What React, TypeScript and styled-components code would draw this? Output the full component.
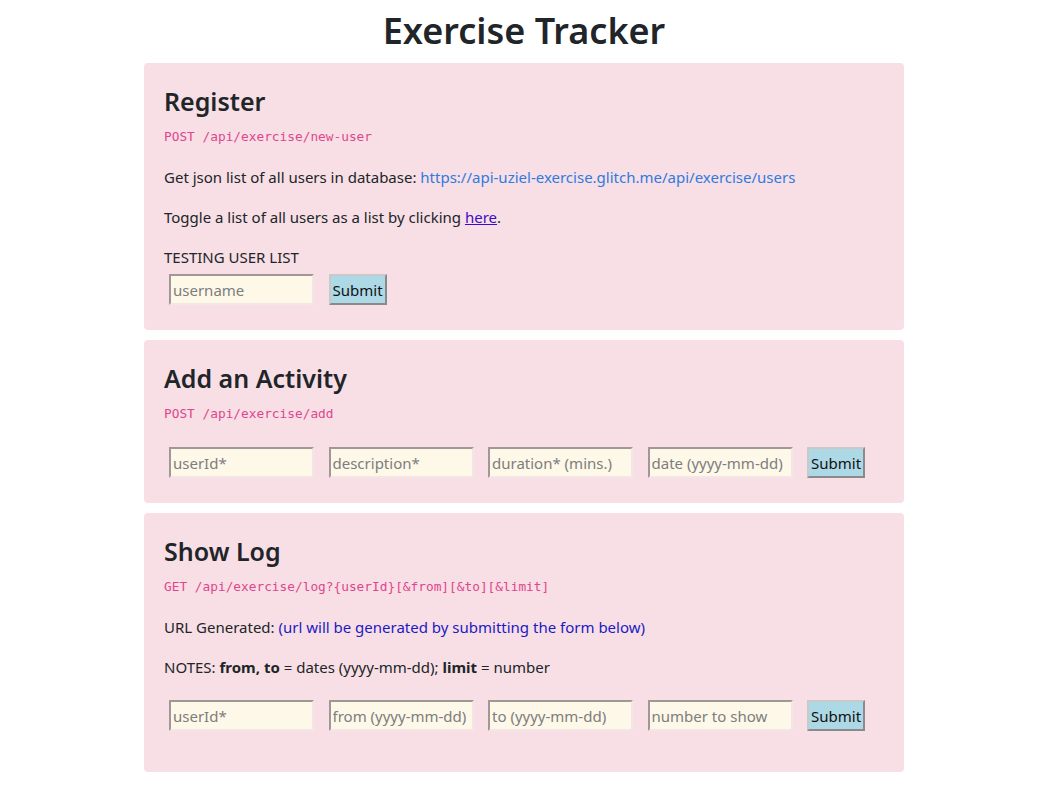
import React from "react";
import styled, { createGlobalStyle } from "styled-components";

const Global = createGlobalStyle`
  html, body { margin: 0; padding: 0; background: #fff; }
  body {
    font-family: "Noto Sans", "Open Sans", sans-serif;
    font-size: 15px;
    line-height: 24px;
    color: #212529;
  }
`;

const Page = styled.div`
  width: 760px;
  margin: 0 0 0 144px;
  padding-top: 7px;
`;

const Title = styled.h1`
  margin: 0 0 8px;
  font-size: 36px;
  line-height: 48px;
  font-weight: 600;
  text-align: center;
`;

const Card = styled.section<{ $extra?: number }>`
  background: #f7dfe5;
  border-radius: 4px;
  padding: 20px 20px ${(p) => 20 + (p.$extra ?? 0)}px;
  margin-bottom: 10px;
`;

const Heading = styled.h2`
  margin: 0 0 7px;
  padding-top: 1.5px;
  font-size: 25px;
  line-height: 33.6px;
  font-weight: 600;
`;

const Endpoint = styled.code`
  display: block;
  margin: 0 0 16px;
  height: 24px;
  font-family: "DejaVu Sans Mono", "Liberation Mono", monospace;
  font-size: 12.8px;
  line-height: 24px;
  color: #e0468e;
`;

const Text = styled.p`
  margin: 0 0 16px;
`;

const Label = styled.div`
  margin: 0;
`;

const Link = styled.a<{ $plain?: boolean }>`
  color: ${(p) => (p.$plain ? "#2f7be0" : "#3a0dca")};
  text-decoration: ${(p) => (p.$plain ? "none" : "underline")};
`;

const Pending = styled.span`
  color: #1c1ac4;
`;

const Form = styled.form`
  display: flex;
  align-items: center;
  gap: 14.5px;
  padding: 5px;
`;

const Field = styled.input`
  box-sizing: border-box;
  width: 145px;
  height: 31px;
  padding: 1px 2px;
  font-family: inherit;
  font-size: 15px;
  background: #fdf8e8;
  border-style: solid;
  border-width: 2px;
  border-color: #a09797 #f3e6e4 #f3e6e4 #a09797;
  color: #212529;
  outline: none;
  &::placeholder { color: #7d7d7d; }
`;

const SubmitButton = styled.button`
  box-sizing: border-box;
  height: 31px;
  padding: 0 2px;
  font-family: inherit;
  font-size: 15px;
  color: #111;
  background: #add8e6;
  border-style: solid;
  border-width: 2px;
  border-color: #c9c9c9 #8a8a8a #8a8a8a #c9c9c9;
`;

export default function App() {
  return (
    <>
      <Global />
      <Page>
        <Title>Exercise Tracker</Title>

        <Card>
          <Heading>Register</Heading>
          <Endpoint>POST /api/exercise/new-user</Endpoint>
          <Text>
            Get json list of all users in database:{" "}
            <Link $plain href="#">
              https://api-uziel-exercise.glitch.me/api/exercise/users
            </Link>
          </Text>
          <Text>
            Toggle a list of all users as a list by clicking <Link href="#">here</Link>.
          </Text>
          <Label>TESTING USER LIST</Label>
          <Form onSubmit={(e) => e.preventDefault()}>
            <Field placeholder="username" />
            <SubmitButton type="submit">Submit</SubmitButton>
          </Form>
        </Card>

        <Card>
          <Heading>Add an Activity</Heading>
          <Endpoint>POST /api/exercise/add</Endpoint>
          <Form onSubmit={(e) => e.preventDefault()}>
            <Field placeholder="userId*" />
            <Field placeholder="description*" />
            <Field placeholder="duration* (mins.)" />
            <Field placeholder="date (yyyy-mm-dd)" />
            <SubmitButton type="submit">Submit</SubmitButton>
          </Form>
        </Card>

        <Card $extra={16}>
          <Heading>Show Log</Heading>
          <Endpoint>GET /api/exercise/log?{"{userId}"}[&amp;from][&amp;to][&amp;limit]</Endpoint>
          <Text>
            URL Generated: <Pending>(url will be generated by submitting the form below)</Pending>
          </Text>
          <Text>
            NOTES: <b>from, to</b> = dates (yyyy-mm-dd); <b>limit</b> = number
          </Text>
          <Form onSubmit={(e) => e.preventDefault()}>
            <Field placeholder="userId*" />
            <Field placeholder="from (yyyy-mm-dd)" />
            <Field placeholder="to (yyyy-mm-dd)" />
            <Field placeholder="number to show" />
            <SubmitButton type="submit">Submit</SubmitButton>
          </Form>
        </Card>
      </Page>
    </>
  );
}
